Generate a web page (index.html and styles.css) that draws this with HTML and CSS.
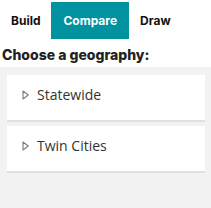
FILE: index.html
```html
<!DOCTYPE html>
<html lang="en">
<head>
    <meta charset="UTF-8">
    <title>Geography</title>
    <link rel="stylesheet" href="styles.css">
</head>
<body>
    <!-- Mode tabs -->
    <nav class="tabs">
        <a class="tab" href="#">Build</a>
        <a class="tab active" href="#">Compare</a>
        <a class="tab" href="#">Draw</a>
    </nav>

    <h2 class="title">Choose a geography:</h2>

    <div class="panel">
        <div class="card">
            <svg class="caret" width="7" height="10" viewBox="0 0 7 10"><path d="M1 1 L6.3 5 L1 9 Z" fill="none" stroke="#7a7a7a" stroke-width="1.1" stroke-linejoin="round"/></svg>
            <span>Statewide</span>
        </div>
        <div class="card">
            <svg class="caret" width="7" height="10" viewBox="0 0 7 10"><path d="M1 1 L6.3 5 L1 9 Z" fill="none" stroke="#7a7a7a" stroke-width="1.1" stroke-linejoin="round"/></svg>
            <span>Twin Cities</span>
        </div>
    </div>
</body>
</html>
```

FILE: styles.css
```css
:root {
    --teal: #00939f;
    --panel-bg: #f2f2f2;
    --text-color: #222;
}

html, body {
    height: 100%;
}

body {
    margin: 0;
    font-family: Inter, 'Open Sans', sans-serif;
    color: var(--text-color);
    background: white;
    display: flex;
    flex-direction: column;
}

.tabs {
    display: flex;
    margin-top: 2px;
}

.tab {
    padding: 0 11px;
    height: 37px;
    line-height: 37px;
    font-size: 12px;
    font-weight: 700;
    color: #111;
    text-decoration: none;
}

.tab.active {
    background-color: var(--teal);
    color: white;
    padding: 0 12px;
}

.title {
    margin: 7px 0 3px 2px;
    font-size: 14px;
    font-weight: 800;
    line-height: 18px;
    color: #222;
}

.panel {
    flex: 1;
    background-color: var(--panel-bg);
    padding: 8px 6px 0 7px;
}

.card {
    background: white;
    border-bottom: 2px solid #e0e0e0;
    height: 45px;
    margin-bottom: 4px;
    padding: 0 0 0 15px;
    display: flex;
    align-items: flex-start;
    gap: 8px;
    font-family: 'Open Sans', sans-serif;
    font-size: 14px;
    line-height: 17px;
    color: #333;
}

.card .caret {
    margin-top: 15px;
}

.card span {
    padding-top: 11px;
}
```
